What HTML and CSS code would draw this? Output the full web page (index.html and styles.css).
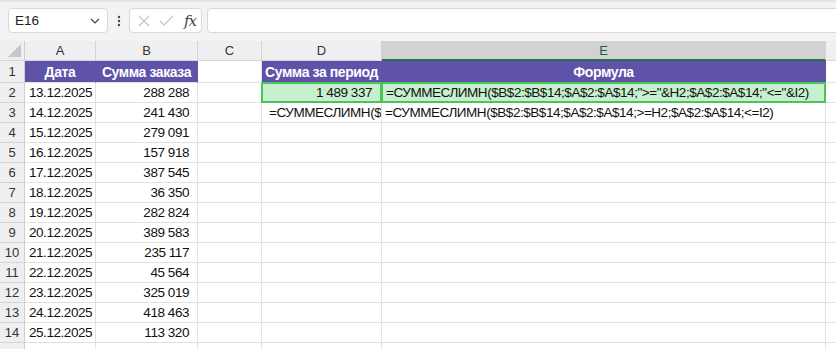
FILE: index.html
```html
<!DOCTYPE html>
<html lang="ru">
<head>
<meta charset="utf-8">
<link rel="stylesheet" href="styles.css">
</head>
<body>
<div class="app">
  <div class="toolbar">
    <div class="namebox">
      <span class="nb-text">E16</span>
      <svg class="chev" width="10" height="6" viewBox="0 0 10 6"><path d="M1 1 L5 5 L9 1" fill="none" stroke="#444" stroke-width="1.2"/></svg>
    </div>
    <div class="dots">
      <svg width="4" height="12" viewBox="0 0 4 12"><circle cx="2" cy="2" r="1.2" fill="#444"/><circle cx="2" cy="6" r="1.2" fill="#444"/><circle cx="2" cy="10" r="1.2" fill="#444"/></svg>
    </div>
    <div class="fxbox">
      <svg class="ic-x" width="12" height="12" viewBox="0 0 12 12"><path d="M1 1 L11 11 M11 1 L1 11" stroke="#c4c4c4" stroke-width="1.2" fill="none"/></svg>
      <svg class="ic-ok" width="15" height="11" viewBox="0 0 15 11"><path d="M1 6 L5 10 L14 1" stroke="#c4c4c4" stroke-width="1.2" fill="none"/></svg>
      <span class="fx">fx</span>
    </div>
    <div class="formula"></div>
  </div>

  <div class="grid">
    <div class="c corner"><span class="tri"></span></div>
    <div class="c ch">A</div>
    <div class="c ch">B</div>
    <div class="c ch">C</div>
    <div class="c ch">D</div>
    <div class="c ch sel">E</div>
    <div class="c ch"></div>

    <div class="c rh r1">1</div>
    <div class="c hd ctr">Дата</div>
    <div class="c hd ctr">Сумма заказа</div>
    <div class="c r1"></div>
    <div class="c hd lft">Сумма за период</div>
    <div class="c hd ctr">Формула</div>
    <div class="c r1"></div>

    <div class="c rh">2</div>
    <div class="c dt">13.12.2025</div>
    <div class="c num">288 288</div>
    <div class="c"></div>
    <div class="c num hl">1 489 337</div>
    <div class="c txt hl">=СУММЕСЛИМН($B$2:$B$14;$A$2:$A$14;"&gt;="&amp;H2;$A$2:$A$14;"&lt;="&amp;I2)</div>
    <div class="c"></div>

    <div class="c rh">3</div>
    <div class="c dt">14.12.2025</div>
    <div class="c num">241 430</div>
    <div class="c"></div>
    <div class="c txt ind">=СУММЕСЛИМН($B$2:$B$14;$A$2:$A$14;"&gt;="&amp;H2;$A$2:$A$14;"&lt;="&amp;I2)</div>
    <div class="c txt">=СУММЕСЛИМН($B$2:$B$14;$A$2:$A$14;&gt;=H2;$A$2:$A$14;&lt;=I2)</div>
    <div class="c"></div>

    <div class="c rh">4</div><div class="c dt">15.12.2025</div><div class="c num">279 091</div><div class="c"></div><div class="c"></div><div class="c"></div><div class="c"></div>
    <div class="c rh">5</div><div class="c dt">16.12.2025</div><div class="c num">157 918</div><div class="c"></div><div class="c"></div><div class="c"></div><div class="c"></div>
    <div class="c rh">6</div><div class="c dt">17.12.2025</div><div class="c num">387 545</div><div class="c"></div><div class="c"></div><div class="c"></div><div class="c"></div>
    <div class="c rh">7</div><div class="c dt">18.12.2025</div><div class="c num">36 350</div><div class="c"></div><div class="c"></div><div class="c"></div><div class="c"></div>
    <div class="c rh">8</div><div class="c dt">19.12.2025</div><div class="c num">282 824</div><div class="c"></div><div class="c"></div><div class="c"></div><div class="c"></div>
    <div class="c rh">9</div><div class="c dt">20.12.2025</div><div class="c num">389 583</div><div class="c"></div><div class="c"></div><div class="c"></div><div class="c"></div>
    <div class="c rh">10</div><div class="c dt">21.12.2025</div><div class="c num">235 117</div><div class="c"></div><div class="c"></div><div class="c"></div><div class="c"></div>
    <div class="c rh">11</div><div class="c dt">22.12.2025</div><div class="c num">45 564</div><div class="c"></div><div class="c"></div><div class="c"></div><div class="c"></div>
    <div class="c rh">12</div><div class="c dt">23.12.2025</div><div class="c num">325 019</div><div class="c"></div><div class="c"></div><div class="c"></div><div class="c"></div>
    <div class="c rh">13</div><div class="c dt">24.12.2025</div><div class="c num">418 463</div><div class="c"></div><div class="c"></div><div class="c"></div><div class="c"></div>
    <div class="c rh">14</div><div class="c dt">25.12.2025</div><div class="c num">113 320</div><div class="c"></div><div class="c"></div><div class="c"></div><div class="c"></div>
    <div class="c rh last"></div><div class="c last"></div><div class="c last"></div><div class="c last"></div><div class="c last"></div><div class="c last"></div><div class="c last"></div>
  </div>
</div>
</body>
</html>
```

FILE: styles.css
```css
* { box-sizing: border-box; }
html, body { margin: 0; padding: 0; }
body {
  background: #ffffff;
  font-family: "Liberation Sans", Arial, sans-serif;
  overflow: hidden;
  width: 836px;
  height: 349px;
}
.app { width: 836px; height: 349px; overflow: hidden; }

.toolbar {
  height: 41px;
  background: #f3f3f3;
  border-top: 2px solid #e4e4e4;
  display: flex;
  align-items: flex-start;
  padding: 6px 0 0 8px;
}
.namebox {
  width: 100px;
  height: 25px;
  background: #fff;
  border: 1px solid #d8d8d8;
  border-radius: 4px;
  display: flex;
  align-items: center;
  justify-content: space-between;
  padding: 0 7px 0 6px;
  font-size: 13.5px;
  color: #222;
}
.dots {
  width: 21px;
  height: 25px;
  display: flex;
  align-items: center;
  justify-content: center;
}
.fxbox {
  width: 73px;
  height: 25px;
  background: #fff;
  border: 1px solid #d8d8d8;
  border-radius: 4px;
  display: flex;
  align-items: center;
  padding: 0 4px 0 8px;
  gap: 9px;
}
.fx {
  font-family: "DejaVu Serif", "Liberation Serif", serif;
  font-style: italic;
  font-size: 15px;
  color: #444;
  margin-left: 1px;
  letter-spacing: -1px;
}
.formula {
  flex: 1;
  margin-left: 5px;
  margin-right: -10px;
  height: 25px;
  background: #fff;
  border: 1px solid #d8d8d8;
  border-radius: 4px;
}

.grid {
  display: grid;
  grid-template-columns: 25px 71px 102px 64px 120px 444px 60px;
  grid-template-rows: 20px 22px repeat(14, 20px);
  font-size: 13.5px;
  letter-spacing: -0.45px;
  color: #111;
}
.c {
  border-right: 1px solid #e1e1e1;
  border-bottom: 1px solid #e1e1e1;
  white-space: nowrap;
  overflow: hidden;
  display: flex;
  align-items: center;
  line-height: 1;
}
.corner {
  background: #efeff1;
  border-right: 1px solid #cfcfcf;
  border-bottom: 1px solid #d4d4d4;
  position: relative;
}
.corner::before {
  content: "";
  position: absolute;
  right: -1px;
  top: 0;
  width: 1px;
  height: 3px;
  background: #222;
}
.tri {
  position: absolute;
  right: 3px;
  bottom: 3px;
  width: 0;
  height: 0;
  border-left: 13px solid transparent;
  border-bottom: 13px solid #c6c6c6;
}
.ch {
  background: #efeff1;
  border-right: 1px solid #d4d4d4;
  border-bottom: 1px solid #d4d4d4;
  justify-content: center;
  color: #333;
  letter-spacing: 0;
  font-size: 13px;
}
.ch.sel {
  background: #d2d2d2;
  border-bottom: 2px solid #217346;
  color: #1b5e35;
}
.rh {
  background: #efeff1;
  border-right: 1px solid #cfcfcf;
  border-bottom: 1px solid #d4d4d4;
  justify-content: center;
  color: #333;
  letter-spacing: 0;
  font-size: 13px;
}
.hd {
  background: #5e52a9;
  border-right-color: #5e52a9;
  color: #fff;
  font-weight: bold;
  font-size: 14px;
  letter-spacing: -0.4px;
}
.ctr { justify-content: center; }
.lft { padding-left: 3px; }
.dt { padding-left: 4px; }
.num { justify-content: flex-end; padding-right: 8px; }
.txt { padding-left: 3px; }
.ind { padding-left: 7px; }
.hl {
  background: #c6efce;
  border: 2px solid #4cc45c;
  margin: -1px 0 0 -1px;
}
.hl + .hl { margin-left: -1px; }
```
